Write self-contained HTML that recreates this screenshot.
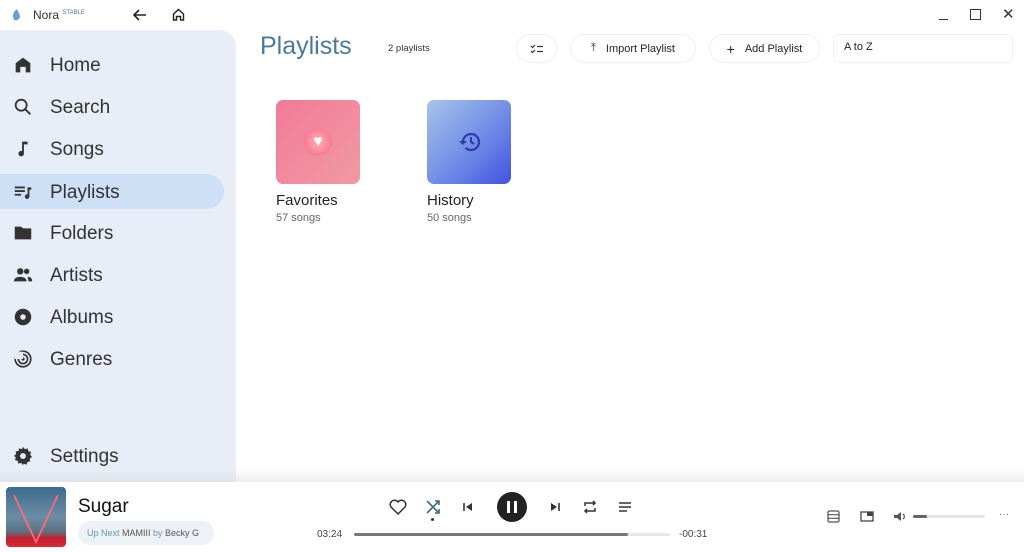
<!DOCTYPE html>
<html><head><meta charset="utf-8"><style>
*{margin:0;padding:0;box-sizing:border-box}
body{width:1024px;height:552px;overflow:hidden;background:#fff;font-family:"Liberation Sans",sans-serif;color:#222;position:relative}
.a{position:absolute}
.side{left:0;top:30px;width:236px;height:452px;background:#e8eef8;border-top-right-radius:16px}
.nav{position:absolute;left:0;width:224px;height:35px;display:flex;align-items:center;font-size:19px;color:#333}
.nav svg{position:absolute;left:12px;width:22px;height:22px}
.nav span{position:absolute;left:50px;top:8px}
.act{background:#cde0f6;border-radius:0 18px 18px 0}
.btn{position:absolute;top:34px;height:29px;border:1.5px solid #eceff2;border-radius:15px;font-size:11px;display:flex;align-items:center;justify-content:center;color:#222}
</style></head><body>
<div class="a" style="left:10px;top:8px;width:12px;height:14px"><svg width="12" height="14" viewBox="0 0 12 14"><path d="M7 1C3 4 2 8 4 12c2 1 5 0 6-3C10 6 8 4 7 1z" fill="#6a9fd6"/></svg></div>
<div class="a" style="left:33px;top:8px;font-size:12px;color:#333">Nora <sup style="font-size:6px;color:#4a7a99">STABLE</sup></div>
<svg class="a" style="left:133px;top:9px" width="14" height="12" viewBox="0 0 14 12"><path d="M13 6H2M6 1 1 6l5 5" stroke="#222" stroke-width="1.6" fill="none"/></svg>
<svg class="a" style="left:172px;top:8px" width="13" height="13" viewBox="0 0 13 13"><path d="M1.5 6 6.5 1.5 11.5 6v6h-3V8.5h-4V12h-3z" stroke="#222" stroke-width="1.4" fill="none"/></svg>
<div class="a" style="left:939px;top:19px;width:9px;height:1px;background:#333"></div>
<div class="a" style="left:970px;top:9px;width:11px;height:11px;border:1.3px solid #333"></div>
<div class="a" style="left:1002px;top:5px;font-size:15px;color:#333">✕</div>

<div class="a side"></div>
<div class="nav" style="top:47px"><svg viewBox="0 0 24 24"><path d="M12 4 4 10v10h5v-6h6v6h5V10z" fill="#333"/></svg><span>Home</span></div>
<div class="nav" style="top:89px"><svg viewBox="0 0 24 24"><circle cx="10" cy="10" r="6" stroke="#333" stroke-width="2" fill="none"/><path d="M14.5 14.5 20 20" stroke="#333" stroke-width="2"/></svg><span>Search</span></div>
<div class="nav" style="top:131px"><svg viewBox="0 0 24 24"><path d="M11 4h6v3h-4v10a3 3 0 1 1-2-2.8z" fill="#333"/></svg><span>Songs</span></div>
<div class="nav act" style="top:174px"><svg viewBox="0 0 24 24"><path d="M3 7h11M3 11h11M3 15h7" stroke="#333" stroke-width="2"/><path d="M17 7h4v2.5h-2V17a2.5 2.5 0 1 1-2-2.4z" fill="#333"/></svg><span>Playlists</span></div>
<div class="nav" style="top:215px"><svg viewBox="0 0 24 24"><path d="M3 5h7l2 2h9v12H3z" fill="#333"/></svg><span>Folders</span></div>
<div class="nav" style="top:257px"><svg viewBox="0 0 24 24"><circle cx="9" cy="8" r="3.5" fill="#333"/><circle cx="16" cy="8" r="3" fill="#333"/><path d="M2 19c0-4 4-5 7-5s7 1 7 5zM17 14c3 0 5 1 5 5h-4c0-2-1-4-1-5z" fill="#333"/></svg><span>Artists</span></div>
<div class="nav" style="top:299px"><svg viewBox="0 0 24 24"><circle cx="12" cy="12" r="9" fill="#333"/><circle cx="12" cy="12" r="3" fill="#e8eef8"/></svg><span>Albums</span></div>
<div class="nav" style="top:341px"><svg viewBox="0 0 24 24"><circle cx="12" cy="12" r="8.5" stroke="#333" stroke-width="1.8" fill="none"/><circle cx="12" cy="12" r="5" stroke="#333" stroke-width="1.8" fill="none"/><circle cx="12" cy="12" r="1.8" fill="#333"/><path d="M3 4h9v8H3z" fill="#e8eef8"/></svg><span>Genres</span></div>
<div class="nav" style="top:438px"><svg viewBox="0 0 24 24"><path d="M12 2l2 2.5 3-.8.8 3 3 1-1 3 2 2.3-2.5 2 .5 3-3 .5-1 3-3-1.2L12 22l-2-2.5-3 .8-.8-3-3-1 1-3L2 12l2.5-2-.5-3 3-.5 1-3 3 1.2z" fill="#333"/><circle cx="12" cy="12" r="3.2" fill="#e8eef8"/></svg><span>Settings</span></div>

<div class="a" style="left:260px;top:32px;font-size:25px;color:#4a7a99">Playlists</div>
<div class="a" style="left:388px;top:43px;font-size:9.5px;color:#333">2 playlists</div>
<div class="btn" style="left:516px;width:41px"><svg width="14" height="10" viewBox="0 0 14 10"><path d="M1 2l1.5 1.5L5 1M1 7l1.5 1.5L5 6M7 2.5h6M7 7.5h6" stroke="#333" stroke-width="1.2" fill="none"/></svg></div>
<div class="btn" style="left:570px;width:126px"><span style="margin-right:10px">⤒</span>Import Playlist</div>
<div class="btn" style="left:709px;width:111px"><span style="margin-right:10px;font-size:14px">+</span>Add Playlist</div>
<div class="a" style="left:833px;top:34px;width:180px;height:29px;border:1.5px solid #eceff2;border-radius:5px;font-size:11px;padding:6px 10px">A to Z</div>

<div class="a" style="left:276px;top:100px;width:84px;height:84px;border-radius:7px;background:linear-gradient(135deg,#f27a98,#f09aa2)"></div>
<div class="a" style="left:304px;top:128px;width:28px;height:28px;border-radius:50%;background:radial-gradient(circle,#ffb0b5,#f36586);display:flex;align-items:center;justify-content:center;color:#fff;font-size:16px">♥</div>
<div class="a" style="left:427px;top:100px;width:84px;height:84px;border-radius:7px;background:linear-gradient(135deg,#a7c4ea,#6a86e6 60%,#4252e0)"></div>
<svg class="a" style="left:458px;top:131px" width="24" height="22" viewBox="0 0 24 22"><path d="M5 11a8 8 0 1 1 2.5 5.8" stroke="#2e3aa8" stroke-width="2.2" fill="none"/><path d="M1 10l4 4 4-4z" fill="#2e3aa8"/><path d="M13 6v5l3 2" stroke="#2e3aa8" stroke-width="2" fill="none"/></svg>
<div class="a" style="left:276px;top:192px;font-size:15px;color:#222">Favorites</div>
<div class="a" style="left:276px;top:212px;font-size:11px;color:#666">57 songs</div>
<div class="a" style="left:427px;top:192px;font-size:15px;color:#222">History</div>
<div class="a" style="left:427px;top:212px;font-size:11px;color:#666">50 songs</div>

<div class="a" style="left:0;top:468px;width:1024px;height:16px;background:linear-gradient(#fff,#ececec 90%,#fff)"></div>
<div class="a" style="left:0;top:468px;width:236px;height:16px;background:linear-gradient(#e8eef8,#e0e2e6)"></div>
<div class="a" style="left:0;top:482px;width:1024px;height:70px;background:#fff"></div>
<div class="a" style="left:6px;top:487px;width:60px;height:60px;border-radius:4px;overflow:hidden;background:linear-gradient(#3c6c8c,#6d8ca6 50%,#5a7080 75%,#c52030 85%,#d82a3a)"><svg width="60" height="60"><path d="M8 8 30 55 52 8" stroke="#ff6a7a" stroke-width="1.8" fill="none"/></svg></div>
<div class="a" style="left:78px;top:496px;font-size:19px;color:#111">Sugar</div>
<div class="a" style="left:78px;top:521px;width:136px;height:24px;border-radius:12px;background:#eef1f5;font-size:9px;padding:7px 9px;color:#6a99b8;white-space:nowrap">Up Next <span style="color:#555">MAMIII</span> by <span style="color:#555">Becky G</span></div>

<svg class="a" style="left:389px;top:499px" width="18" height="16" viewBox="0 0 18 16"><path d="M9 15 2 8a4 4 0 0 1 7-5 4 4 0 0 1 7 5z" stroke="#333" stroke-width="1.5" fill="none"/></svg>
<svg class="a" style="left:425px;top:499px" width="16" height="16" viewBox="0 0 16 16"><path d="M2 2l12 12M10 2h4v4M2 14 14 2M10 14h4v-4" stroke="#3a6a88" stroke-width="1.6" fill="none"/></svg>
<div class="a" style="left:431px;top:518px;width:3px;height:3px;border-radius:50%;background:#333"></div>
<svg class="a" style="left:462px;top:501px" width="12" height="12" viewBox="0 0 12 12"><path d="M2 2v8" stroke="#333" stroke-width="1.6"/><path d="M10 2 4 6l6 4z" fill="#333"/></svg>
<div class="a" style="left:497px;top:492px;width:30px;height:30px;border-radius:50%;background:#222"></div>
<div class="a" style="left:507px;top:501px;width:3px;height:12px;background:#fff"></div>
<div class="a" style="left:514px;top:501px;width:3px;height:12px;background:#fff"></div>
<svg class="a" style="left:549px;top:501px" width="12" height="12" viewBox="0 0 12 12"><path d="M10 2v8" stroke="#333" stroke-width="1.6"/><path d="M2 2l6 4-6 4z" fill="#333"/></svg>
<svg class="a" style="left:583px;top:499px" width="14" height="16" viewBox="0 0 14 16"><path d="M2 7V4h10M10 2l2 2-2 2M12 9v3H2M4 14l-2-2 2-2" stroke="#333" stroke-width="1.5" fill="none"/></svg>
<svg class="a" style="left:618px;top:501px" width="14" height="12" viewBox="0 0 14 12"><path d="M1 2h12M1 6h12M1 10h8" stroke="#333" stroke-width="1.5"/></svg>

<div class="a" style="left:317px;top:529px;font-size:10px;color:#444">03:24</div>
<div class="a" style="left:354px;top:533px;width:316px;height:3px;background:#e8e8e8;border-radius:2px"></div>
<div class="a" style="left:354px;top:533px;width:274px;height:3px;background:#777;border-radius:2px"></div>
<div class="a" style="left:679px;top:529px;font-size:10px;color:#444">-00:31</div>

<svg class="a" style="left:827px;top:510px" width="13" height="13" viewBox="0 0 13 13"><rect x="1" y="1" width="11" height="11" rx="1.5" stroke="#555" stroke-width="1.3" fill="none"/><path d="M1 4.7h11M1 8.3h11" stroke="#555" stroke-width="1.2"/></svg>
<svg class="a" style="left:860px;top:511px" width="14" height="11" viewBox="0 0 14 11"><rect x="1" y="1" width="12" height="9" stroke="#444" stroke-width="1.3" fill="none"/><rect x="7" y="1" width="6" height="4" fill="#444"/></svg>
<svg class="a" style="left:893px;top:511px" width="13" height="11" viewBox="0 0 13 11"><path d="M1 4h3l4-3v9L4 7H1z" fill="#555"/><path d="M10 3a3 3 0 0 1 0 5" stroke="#555" stroke-width="1.2" fill="none"/></svg>
<div class="a" style="left:913px;top:515px;width:72px;height:3px;background:#e6e6e6;border-radius:2px"></div>
<div class="a" style="left:913px;top:515px;width:14px;height:3px;background:#666;border-radius:2px"></div>
<div class="a" style="left:999px;top:509px;font-size:10px;color:#555">···</div>
</body></html>
